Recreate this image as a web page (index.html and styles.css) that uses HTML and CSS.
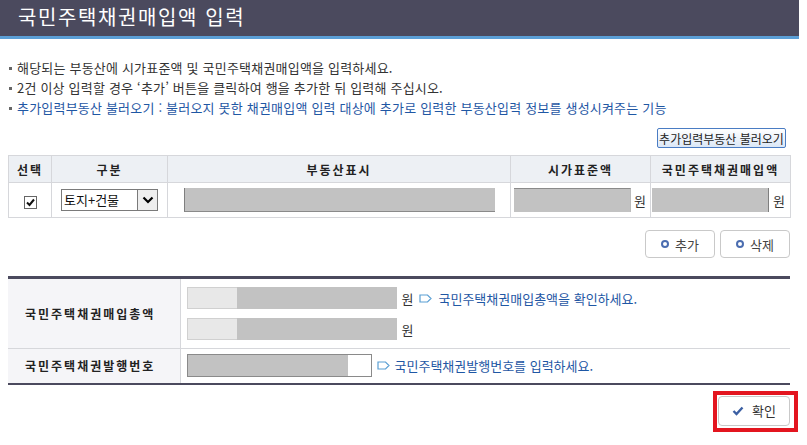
FILE: index.html
```html
<!DOCTYPE html>
<html lang="ko">
<head>
<meta charset="utf-8">
<link rel="stylesheet" href="styles.css">
</head>
<body>
<div class="header"><h1 class="title">국민주택채권매입액 입력</h1></div>
<div class="content">
  <ul class="guide">
    <li>해당되는 부동산에 시가표준액 및 국민주택채권매입액을 입력하세요.</li>
    <li>2건 이상 입력할 경우 ‘추가’ 버튼을 클릭하여 행을 추가한 뒤 입력해 주십시오.</li>
    <li class="blue">추가입력부동산 불러오기 : 불러오지 못한 채권매입액 입력 대상에 추가로 입력한 부동산입력 정보를 생성시켜주는 기능</li>
  </ul>
  <div class="row-right top-btn-row">
    <button class="btn-load">추가입력부동산 불러오기</button>
  </div>
  <table class="grid">
    <colgroup><col class="c1"><col class="c2"><col class="c3"><col class="c4"><col class="c5"></colgroup>
    <thead>
      <tr><th>선택</th><th>구분</th><th>부동산표시</th><th>시가표준액</th><th>국민주택채권매입액</th></tr>
    </thead>
    <tbody>
      <tr>
        <td class="center">
          <span class="chk"><svg width="11" height="11" viewBox="0 0 11 11"><path d="M2 5.5 L4.5 8 L9 2.5" fill="none" stroke="#111" stroke-width="2"/></svg></span>
        </td>
        <td class="sel-cell">
          <span class="select"><span class="sel-text">토지+건물</span><span class="sel-btn"><svg width="12" height="8" viewBox="0 0 12 8"><path d="M1.5 1.5 L6 6 L10.5 1.5" fill="none" stroke="#000" stroke-width="2.2"/></svg></span></span>
        </td>
        <td class="addr-cell"><span class="field field-addr"></span></td>
        <td class="amt-cell"><span class="field field-amt"></span><span class="won">원</span></td>
        <td class="amt-cell2"><span class="field field-amt2"></span><span class="won">원</span></td>
      </tr>
    </tbody>
  </table>
  <div class="row-right act-row">
    <button class="btn-act"><span class="ring"></span>추가</button>
    <button class="btn-act"><span class="ring"></span>삭제</button>
  </div>
  <table class="form">
    <colgroup><col class="fl"><col class="fr"></colgroup>
    <tbody>
      <tr class="r1">
        <th>국민주택채권매입총액</th>
        <td>
          <div class="line"><span class="field2"><span class="light"></span></span><span class="won">원</span><span class="tag"><svg width="13" height="9" viewBox="0 0 13 9"><path d="M1 1 H8.5 L12 4.5 L8.5 8 H1 Z" fill="none" stroke="#5a9fd4" stroke-width="1.2"/></svg></span><span class="note">국민주택채권매입총액을 확인하세요.</span></div>
          <div class="line line2"><span class="field2"><span class="light"></span></span><span class="won">원</span></div>
        </td>
      </tr>
      <tr class="r2">
        <th>국민주택채권발행번호</th>
        <td>
          <div class="line"><span class="field3"><span class="fill"></span></span><span class="tag tag2"><svg width="13" height="9" viewBox="0 0 13 9"><path d="M1 1 H8.5 L12 4.5 L8.5 8 H1 Z" fill="none" stroke="#5a9fd4" stroke-width="1.2"/></svg></span><span class="note">국민주택채권발행번호를 입력하세요.</span></div>
        </td>
      </tr>
    </tbody>
  </table>
  <div class="row-right ok-row">
    <span class="ok-wrap">
      <button class="btn-ok"><svg width="12" height="10" viewBox="0 0 12 10"><path d="M1.5 5 L4.5 8 L10.5 1.5" fill="none" stroke="#3b5fa3" stroke-width="2.4"/></svg>확인</button>
      <span class="highlight"></span>
    </span>
  </div>
</div>
</body>
</html>
```
FILE: styles.css
```css
* { box-sizing: border-box; }
html, body { margin: 0; padding: 0; background: #fff; }
body {
  font-family: "Noto Sans CJK KR", "Noto Sans", sans-serif;
  font-size: 12px;
  color: #333;
  width: 807px;
  height: 445px;
  overflow: hidden;
}
.header {
  width: 799px;
  height: 39px;
  background: #4b4a5e;
  border-bottom: 3px solid #5b9fd6;
}
.title {
  margin: 0;
  padding-left: 18px;
  font-size: 20px;
  font-weight: normal;
  color: #fff;
  line-height: 34px;
  letter-spacing: 1.6px;
}
.content {
  width: 790px;
  padding-left: 8px;
}
.guide {
  list-style: none;
  margin: 19px 0 0 0;
  padding: 0;
}
.guide li {
  position: relative;
  line-height: 20px;
  height: 20px;
  padding-left: 9px;
  white-space: nowrap;
  color: #333;
  font-size: 13px;
  letter-spacing: 0.2px;
}
.guide li::before {
  content: "";
  position: absolute;
  left: 1px;
  top: 9px;
  width: 3px;
  height: 3px;
  background: #666;
}
.guide li.blue { color: #1f57a4; }
.row-right {
  display: flex;
  justify-content: flex-end;
}
.top-btn-row { margin-top: 10px; padding-right: 4px; }
button {
  font-family: inherit;
  cursor: pointer;
}
.btn-load {
  width: 129px;
  height: 20px;
  padding: 0;
  border: 1px solid #4a7cc3;
  border-radius: 2px;
  background: linear-gradient(#ffffff, #dbe7f6);
  font-size: 12px;
  color: #222;
  line-height: 17px;
}
.grid {
  margin-top: 7px;
  width: 782px;
  border-collapse: collapse;
  table-layout: fixed;
}
.grid col.c1 { width: 43px; }
.grid col.c2 { width: 116px; }
.grid col.c3 { width: 343px; }
.grid col.c4 { width: 140px; }
.grid col.c5 { width: 140px; }
.grid th, .grid td {
  border: 1px solid #d6d7db;
}
.grid th {
  height: 27px;
  background: #edf0f4;
  font-weight: bold;
  font-size: 12px;
  color: #222;
  letter-spacing: 2px;
  text-align: center;
  padding: 0;
}
.grid td {
  height: 35px;
  padding: 0;
  vertical-align: middle;
}
.grid td.center { text-align: center; }
.chk {
  display: inline-flex;
  align-items: center;
  justify-content: center;
  width: 13px;
  height: 13px;
  border: 1px solid #666;
  background: #fff;
  vertical-align: middle;
  margin-top: 2px;
}
.sel-cell { padding-left: 9px !important; }
.select {
  display: flex;
  width: 97px;
  height: 22px;
  border: 1px solid #7a7a7a;
  background: #fff;
}
.sel-text {
  flex: 1;
  font-size: 13px;
  line-height: 19px;
  padding-left: 2px;
  color: #111;
}
.sel-btn {
  width: 20px;
  display: flex;
  align-items: center;
  justify-content: center;
  background: #eeeeee;
  border-left: 1px solid #7a7a7a;
}
.field {
  display: inline-block;
  height: 24px;
  background: #c2c2c2;
  vertical-align: middle;
}
.addr-cell { padding-left: 16px !important; }
.field-addr {
  width: 311px;
  border-left: 1px solid #7f7f7f;
  border-bottom: 1px solid #8a8a8a;
}
.amt-cell { padding-left: 3px !important; }
.field-amt {
  width: 117px;
  border-top: 1px solid #8a8a8a;
  border-right: 1px solid #bbb;
}
.amt-cell2 { padding-left: 1px !important; }
.field-amt2 {
  width: 117px;
  border-right: 1px solid #7f7f7f;
}
.won {
  display: inline-block;
  vertical-align: middle;
  font-size: 13px;
  color: #333;
  margin-left: 3px;
}
.amt-cell2 .won { margin-left: 4px; }
.act-row { margin-top: 12px; gap: 5px; }
.btn-act {
  width: 70px;
  height: 28px;
  display: flex;
  align-items: center;
  justify-content: center;
  gap: 6px;
  padding: 0;
  border: 1px solid #c9c9c9;
  border-radius: 4px;
  background: #fff;
  font-size: 13px;
  color: #444;
}
.ring {
  width: 8px;
  height: 8px;
  border: 2px solid #4b6db0;
  border-radius: 50%;
}
.form {
  margin-top: 18px;
  width: 782px;
  border-collapse: collapse;
  table-layout: fixed;
  border-top: 3px solid #4b4a5e;
  border-bottom: 2px solid #4b4a5e;
}
.form col.fl { width: 172px; }
.form th {
  background: #f5f5f8;
  text-align: left;
  padding: 0 0 0 17px;
  font-size: 12px;
  font-weight: bold;
  color: #222;
  letter-spacing: 2px;
  border-right: 1px solid #d6d7db;
  border-bottom: 1px solid #d6d7db;
}
.form td {
  padding: 0 0 0 6px;
  border-bottom: 1px solid #d6d7db;
}
.form tr:last-child th, .form tr:last-child td { border-bottom: 0; }
.r1 th, .r1 td { height: 71px; }
.r2 th, .r2 td { height: 35px; }
.line {
  display: flex;
  align-items: center;
  height: 22px;
}
.line2 { margin-top: 9px; }
.field2 {
  display: flex;
  width: 210px;
  height: 22px;
  background: #c2c2c2;
}
.field2 .light {
  width: 50px;
  height: 22px;
  background: #e8e8e8;
  border: 1px solid #d0d0d0;
  border-right: 0;
}
.field3 {
  display: flex;
  width: 185px;
  height: 23px;
  border: 1px solid #8a8a8a;
  background: #fff;
}
.field3 .fill {
  width: 160px;
  background: #c2c2c2;
}
.line .won { margin-left: 5px; }
.tag {
  display: inline-flex;
  margin-left: 6px;
  margin-right: 6px;
}
.tag2 { margin-left: 5px; margin-right: 5px; }
.note {
  color: #1f57a4;
  font-size: 13px;
  white-space: nowrap;
  letter-spacing: 0;
}
.ok-row { margin-top: 11px; }
.ok-wrap {
  position: relative;
  display: inline-block;
}
.btn-ok {
  width: 72px;
  height: 30px;
  display: flex;
  align-items: center;
  justify-content: center;
  gap: 8px;
  padding: 0;
  border: 1px solid #c9c9c9;
  border-radius: 4px;
  background: #fff;
  font-size: 13px;
  color: #333;
}
.highlight {
  position: absolute;
  left: -5px;
  top: -5px;
  right: -8px;
  bottom: -6px;
  border: 4px solid #e3151f;
  pointer-events: none;
}
```
